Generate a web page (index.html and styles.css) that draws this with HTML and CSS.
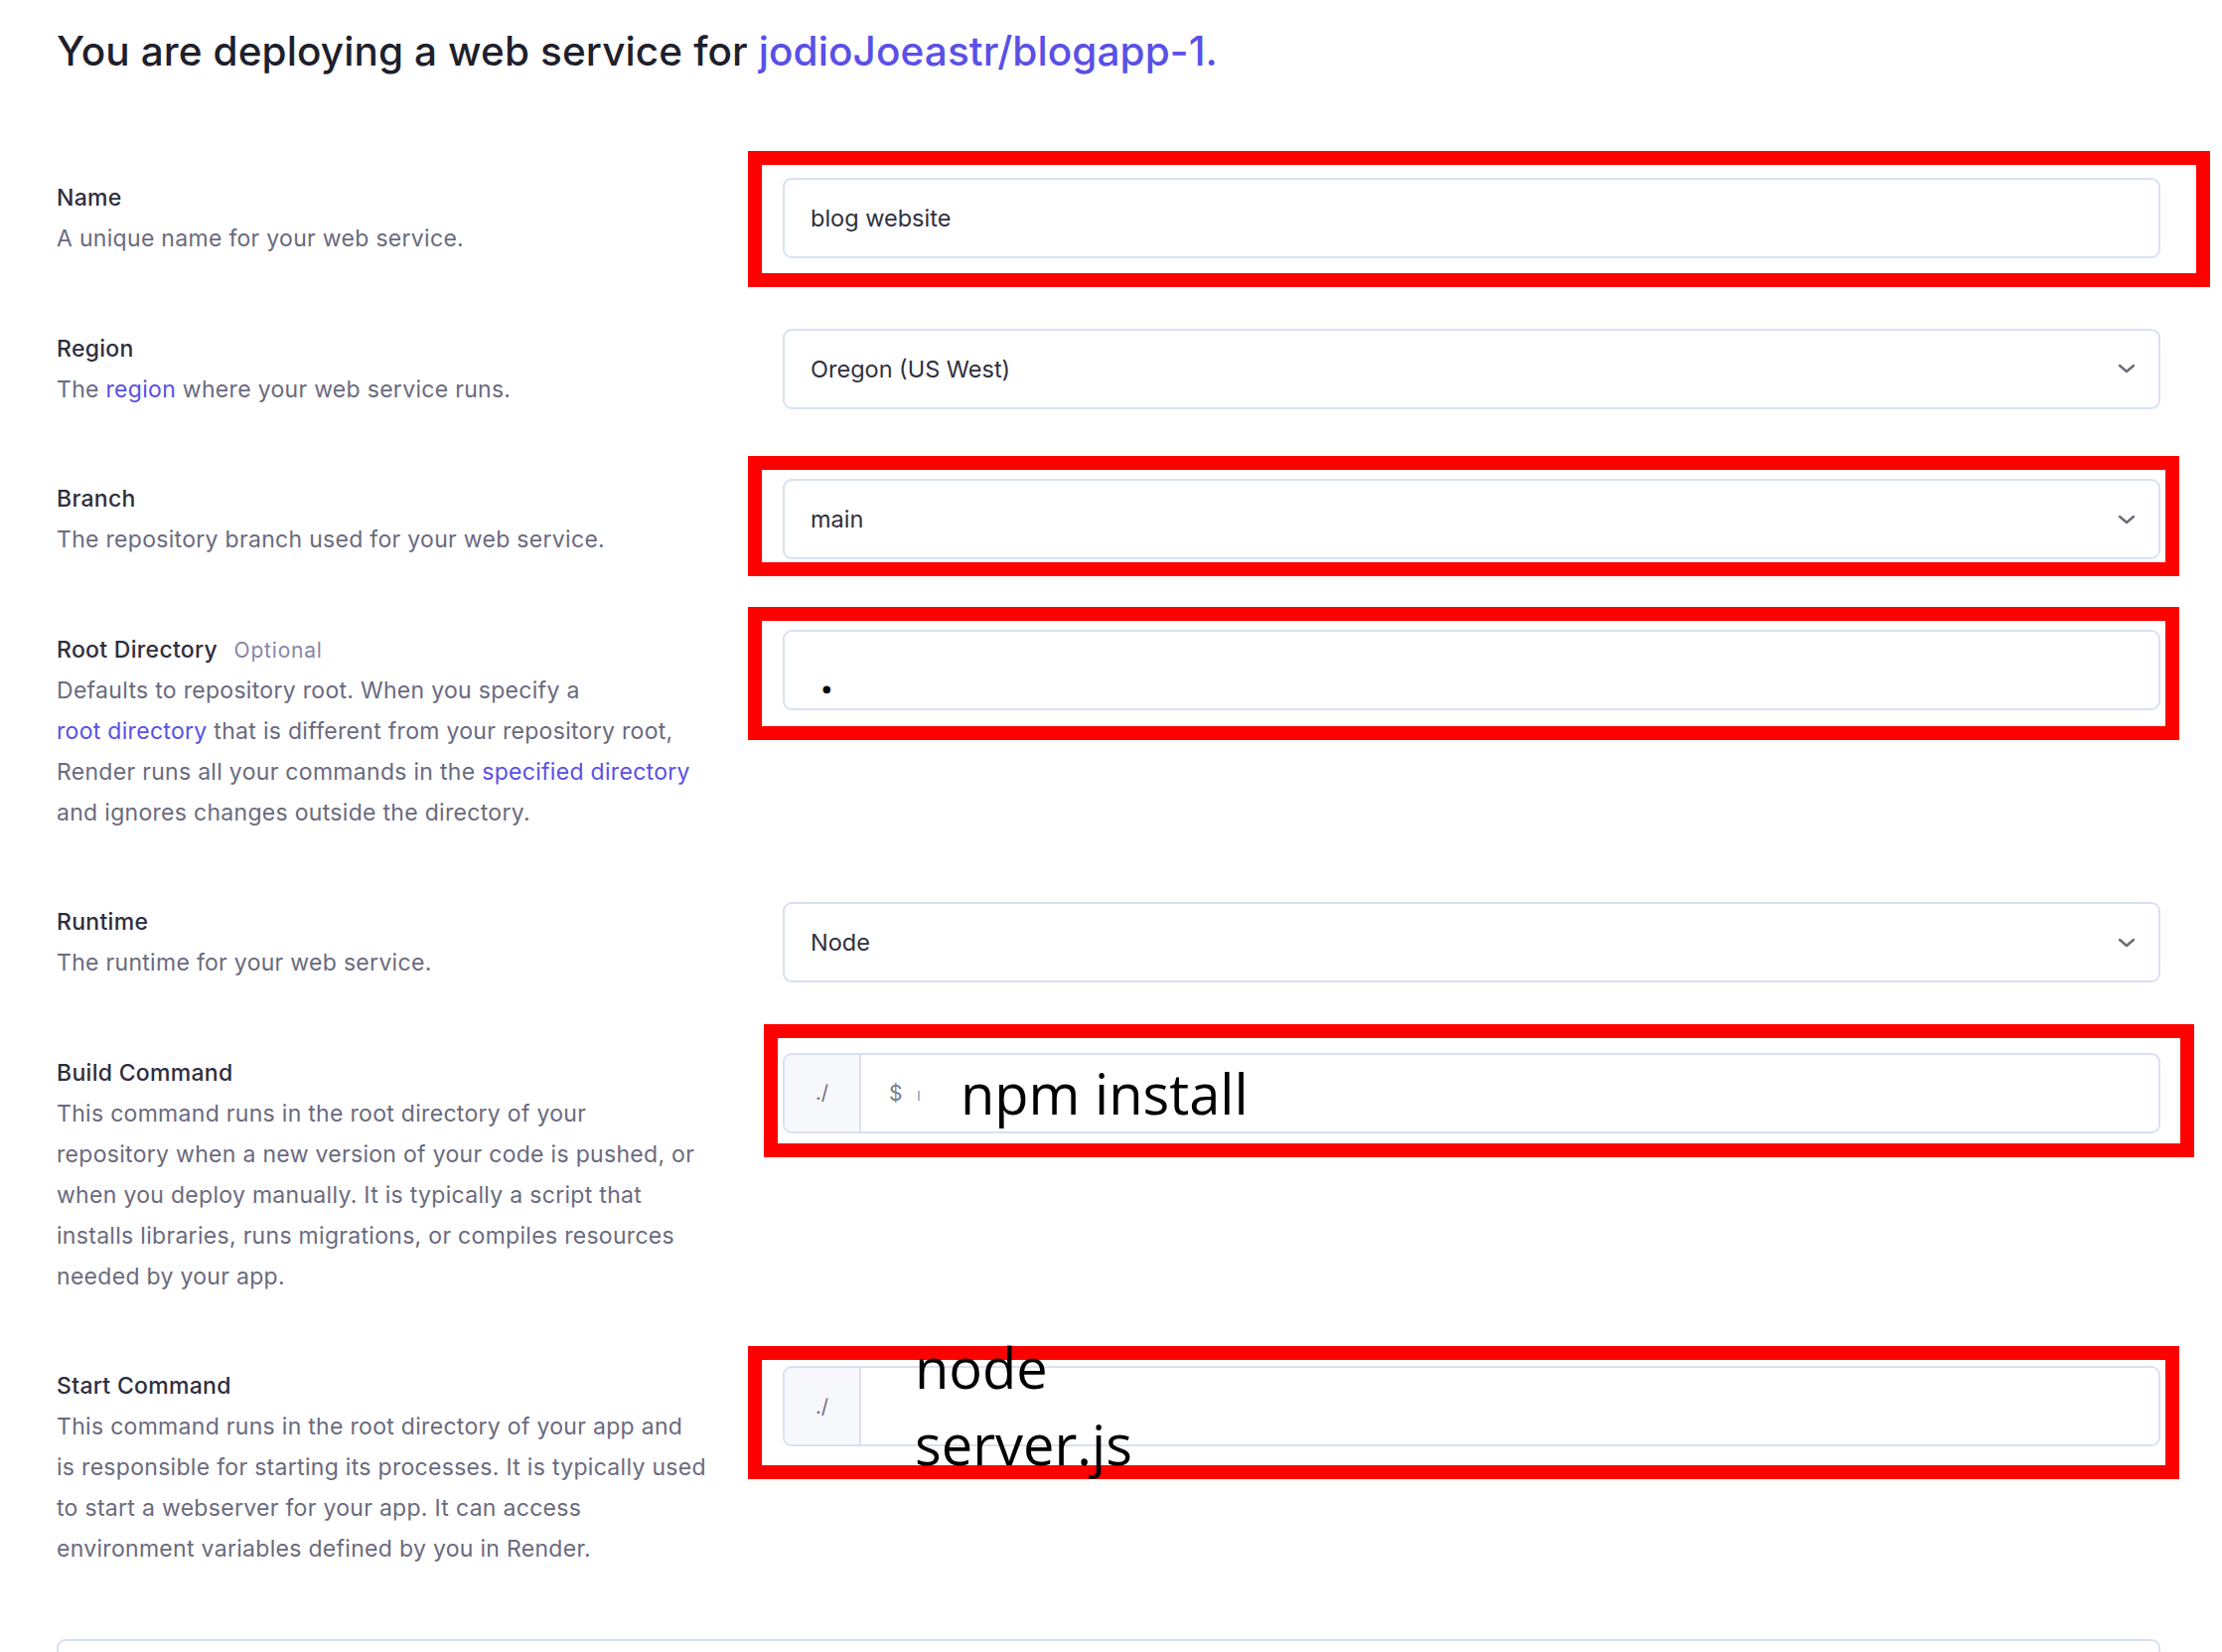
FILE: index.html
```html
<!DOCTYPE html>
<html lang="en">
<head>
<meta charset="utf-8">
<title>Deploy web service</title>
<link rel="stylesheet" href="styles.css">
</head>
<body>
<main class="page">
  <header class="header">
    <h1 class="title">You are deploying a web service for <a class="repo" href="#">jodioJoeastr/blogapp-1.</a></h1>
  </header>

  <section class="form">
    <div class="info">
      <div class="label">Name</div>
      <div class="desc">A unique name for your web service.</div>
    </div>
    <div class="field">
      <div class="input">blog website</div>
      <span class="mark mark-name"></span>
    </div>

    <div class="info">
      <div class="label">Region</div>
      <div class="desc">The <a class="link" href="#">region</a> where your web service runs.</div>
    </div>
    <div class="field">
      <div class="input select">
        <span>Oregon (US West)</span>
        <svg class="chevron" viewBox="0 0 18 10" width="18" height="10"><path d="M2 2l7 6 7-6" fill="none" stroke="#6b6b78" stroke-width="2.4" stroke-linecap="round" stroke-linejoin="round"/></svg>
      </div>
    </div>

    <div class="info">
      <div class="label">Branch</div>
      <div class="desc">The repository branch used for your web service.</div>
    </div>
    <div class="field">
      <div class="input select">
        <span>main</span>
        <svg class="chevron" viewBox="0 0 18 10" width="18" height="10"><path d="M2 2l7 6 7-6" fill="none" stroke="#6b6b78" stroke-width="2.4" stroke-linecap="round" stroke-linejoin="round"/></svg>
      </div>
      <span class="mark mark-branch"></span>
    </div>

    <div class="info">
      <div class="label">Root Directory <span class="optional">Optional</span></div>
      <div class="desc">Defaults to repository root. When you specify a<br><a class="link" href="#">root directory</a> that is different from your repository root,<br>Render runs all your commands in the <a class="link" href="#">specified directory</a><br>and ignores changes outside the directory.</div>
    </div>
    <div class="field">
      <div class="input"></div>
      <span class="mark mark-root"></span>
      <span class="note note-dot">.</span>
    </div>

    <div class="info">
      <div class="label">Runtime</div>
      <div class="desc">The runtime for your web service.</div>
    </div>
    <div class="field">
      <div class="input select">
        <span>Node</span>
        <svg class="chevron" viewBox="0 0 18 10" width="18" height="10"><path d="M2 2l7 6 7-6" fill="none" stroke="#6b6b78" stroke-width="2.4" stroke-linecap="round" stroke-linejoin="round"/></svg>
      </div>
    </div>

    <div class="info">
      <div class="label">Build Command</div>
      <div class="desc">This command runs in the root directory of your<br>repository when a new version of your code is pushed, or<br>when you deploy manually. It is typically a script that<br>installs libraries, runs migrations, or compiles resources<br>needed by your app.</div>
    </div>
    <div class="field">
      <div class="input command">
        <span class="prefix">./</span>
        <span class="prompt">$</span><span class="caret"></span>
      </div>
      <span class="mark mark-build"></span>
      <span class="note note-build">npm install</span>
    </div>

    <div class="info">
      <div class="label">Start Command</div>
      <div class="desc">This command runs in the root directory of your app and<br>is responsible for starting its processes. It is typically used<br>to start a webserver for your app. It can access<br>environment variables defined by you in Render.</div>
    </div>
    <div class="field">
      <div class="input command">
        <span class="prefix">./</span>
      </div>
      <span class="mark mark-start"></span>
      <span class="note note-start">node<br>server.js</span>
    </div>

    <div class="panel"></div>
  </section>
</main>
</body>
</html>
```

FILE: styles.css
```css
html, body {
  margin: 0;
  padding: 0;
  background: #ffffff;
}

body {
  font-family: Inter, "Noto Sans", sans-serif;
  color: #2b2b3b;
  overflow: hidden;
}

.page {
  padding-left: 57px;
  width: 2118px;
}

.header {
  height: 179px;
}

.title {
  margin: 0;
  padding-top: 28px;
  font-size: 40.5px;
  line-height: 48px;
  font-weight: 500;
  color: #1f1f2c;
  letter-spacing: 0.1px;
}

.repo {
  color: #5a50e6;
  text-decoration: none;
}

.form {
  display: grid;
  grid-template-columns: 731px 1387px;
  row-gap: 69.5px;
}

.info {
  font-size: 23px;
  line-height: 41px;
  letter-spacing: 0.3px;
}

.label {
  color: #2e2e40;
  font-weight: 500;
}

.optional {
  font-size: 21px;
  font-weight: 400;
  color: #8686a6;
  margin-left: 10px;
  letter-spacing: 0.8px;
}

.desc {
  color: #6a6a7e;
}

.link {
  color: #5a50e6;
  text-decoration: none;
}

.field {
  position: relative;
  align-self: start;
}

.input {
  box-sizing: border-box;
  height: 81px;
  border: 2px solid #d9e0f1;
  border-radius: 9px;
  background: #ffffff;
  padding: 0 26px;
  display: flex;
  align-items: center;
  font-size: 23.5px;
  color: #2f2f3c;
}

.select {
  justify-content: space-between;
  padding-right: 23px;
}

.chevron {
  display: block;
}

.command {
  padding: 0;
}

.prefix {
  box-sizing: border-box;
  width: 77px;
  height: 100%;
  display: flex;
  align-items: center;
  justify-content: center;
  background: #f7f8fc;
  border-right: 2px solid #d9e0f1;
  border-radius: 7px 0 0 7px;
  color: #6d6d80;
  font-size: 20px;
}

.prompt {
  margin-left: 28px;
  color: #7a7a8c;
  font-size: 21px;
}

.caret {
  width: 2px;
  height: 10px;
  margin-left: 16px;
  margin-top: 6px;
  background: #b4b4c2;
}

.mark {
  position: absolute;
  border: 14px solid #ff0000;
  box-sizing: border-box;
  pointer-events: none;
}

.mark-name {
  left: -35px;
  right: -50px;
  top: -27px;
  bottom: -29px;
}

.mark-branch {
  left: -35px;
  right: -19px;
  top: -23px;
  bottom: -17px;
}

.mark-root {
  left: -35px;
  right: -19px;
  top: -23px;
  bottom: -30px;
}

.mark-build {
  left: -19px;
  right: -34px;
  top: -29px;
  bottom: -24px;
}

.mark-start {
  left: -35px;
  right: -19px;
  top: -20px;
  bottom: -33px;
}

.note {
  position: absolute;
  font-family: "Open Sans", "Noto Sans", sans-serif;
  color: #000000;
  font-size: 56px;
  line-height: 77px;
  white-space: nowrap;
}

.note-dot {
  left: 38px;
  top: 25px;
  font-size: 44px;
  line-height: 44px;
  font-weight: 700;
}

.note-build {
  left: 179px;
  top: 2px;
}

.note-start {
  left: 133px;
  top: -37px;
}

.panel {
  grid-column: 1 / -1;
  height: 120px;
  border: 2px solid #d9e0f1;
  border-radius: 9px;
  box-sizing: border-box;
}
```
